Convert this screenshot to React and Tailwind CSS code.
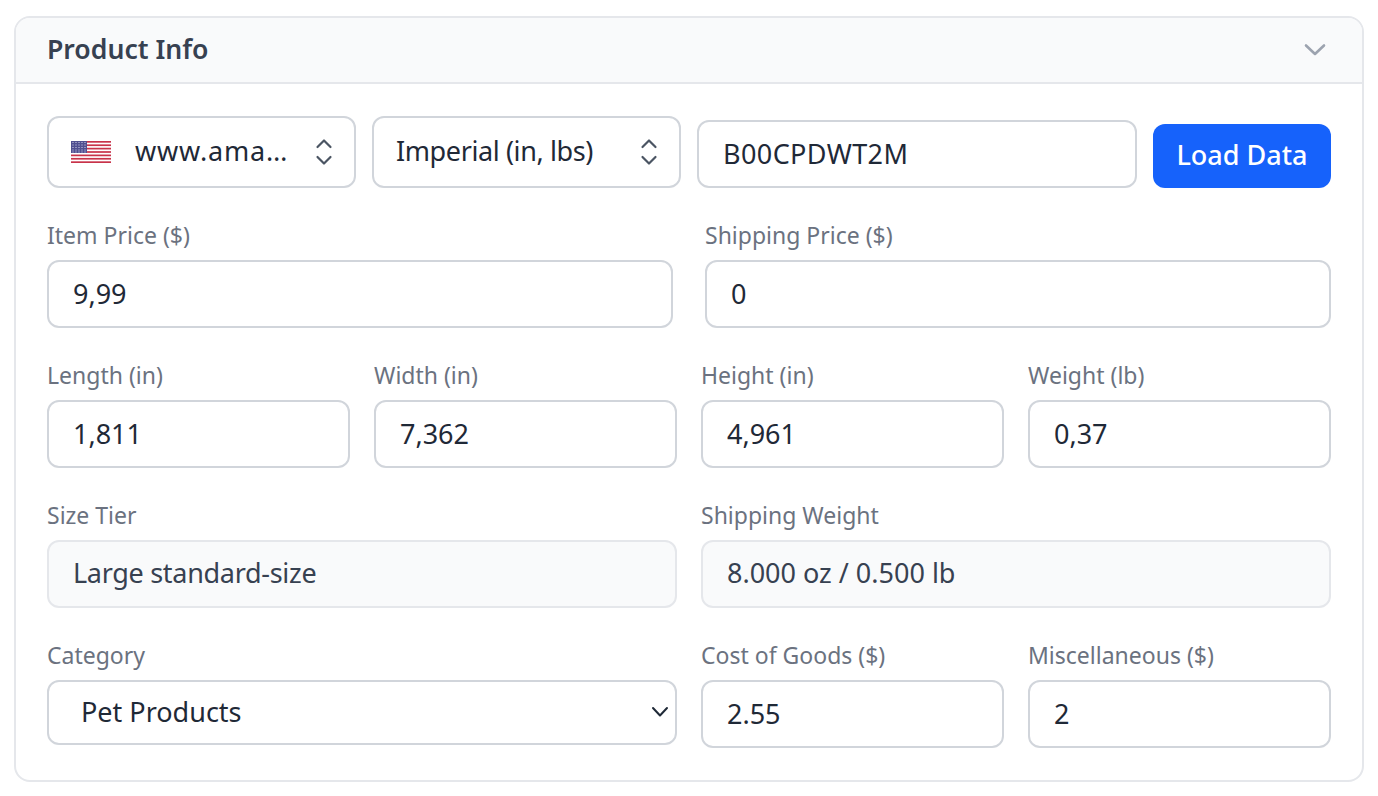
import React from "react";

const inputCls = "block w-full h-[68px] rounded-[12px] border-2 border-[#d1d5db] bg-white pl-[24px] pr-3 pb-[2px] text-[27px] text-[#1f2937] outline-none";
const labelCls = "block h-[32px] mb-2 text-[23px] leading-[30px] text-[#6b7280]";

function Updown() {
  return (
    <svg width="20" height="30" viewBox="0 0 20 30" fill="none" stroke="#4b5563" strokeWidth="2.2" strokeLinecap="round" strokeLinejoin="round" className="shrink-0">
      <path d="M3.5 10 L10 3.5 L16.5 10" />
      <path d="M3.5 20 L10 26.5 L16.5 20" />
    </svg>
  );
}

function Flag() {
  const stripes = [0, 1, 2, 3, 4, 5, 6, 7, 8, 9, 10, 11, 12];
  return (
    <svg width="40" height="22" viewBox="0 0 40 22" className="shrink-0">
      <rect width="40" height="22" fill="#fff" />
      {stripes.filter((i) => i % 2 === 0).map((i) => (
        <rect key={i} x="0" y={i * (22 / 13)} width="40" height={22 / 13} fill="#c8334a" />
      ))}
      <rect width="16" height="12" fill="#4f4f90" />
      {[1.5, 4, 6.5, 9, 11].map((y) =>
        [2, 5, 8, 11, 14].map((x) => <rect key={x + "-" + y} x={x - 0.5} y={y - 0.5} width="1" height="1" fill="#d8d8ee" />)
      )}
    </svg>
  );
}

function Field({ label, value, muted, tracking }) {
  return (
    <div className="min-w-0 flex-1">
      <label className={labelCls}>{label}</label>
      {muted ? (
        <div className={"flex h-[68px] items-center rounded-[12px] border-2 border-[#e5e7eb] bg-[#f9fafb] pl-[24px] pb-[2px] text-[27px] text-[#374151] " + (tracking || "")}>{value}</div>
      ) : (
        <input className={inputCls} defaultValue={value} />
      )}
    </div>
  );
}

export default function App() {
  return (
    <div className="h-[796px] w-[1378px] bg-white pl-[14px] pt-[16px] font-['Noto_Sans',sans-serif]">
      <div className="w-[1350px] overflow-hidden rounded-[16px] border-2 border-[#e5e7eb]">
        <div className="flex h-[66px] items-center justify-between border-b-2 border-[#e5e7eb] bg-[#f9fafb] pl-[31px] pr-[35px]">
          <h2 className="text-[26.6px] font-semibold text-[#374151]">Product Info</h2>
          <svg width="24" height="14" viewBox="0 0 24 14" fill="none" stroke="#9ca3af" strokeWidth="2.6" strokeLinecap="round" strokeLinejoin="round">
            <path d="M3 2.5 L12 11 L21 2.5" />
          </svg>
        </div>
        <div className="flex flex-col gap-8 px-[31px] pb-[32px] pt-[32px]">
          <div className="flex items-end gap-4">
            <div className="flex h-[72px] w-[309px] shrink-0 items-center rounded-[12px] border-2 border-[#d1d5db] bg-white pl-[22px] pr-[20px]">
              <Flag />
              <span className="ml-[24px] flex-1 pb-[2px] text-[27px] tracking-[0.8px] text-[#1f2937]">www.ama…</span>
              <Updown />
            </div>
            <div className="flex h-[72px] w-[309px] shrink-0 items-center justify-between rounded-[12px] border-2 border-[#d1d5db] bg-white pl-[22px] pr-[20px]">
              <span className="pb-[2px] text-[27px] tracking-[-0.4px] text-[#1f2937]">Imperial (in, lbs)</span>
              <Updown />
            </div>
            <input className={inputCls + " !w-[440px] shrink-0 tracking-[0.4px]"} defaultValue="B00CPDWT2M" />
            <button className="h-[64px] w-[178px] shrink-0 rounded-[12px] bg-[#1662fb] pb-[2px] text-[27px] font-medium text-white">Load Data</button>
          </div>

          <div className="flex gap-8">
            <Field label="Item Price ($)" value="9,99" />
            <Field label="Shipping Price ($)" value="0" />
          </div>

          <div className="flex gap-6">
            <Field label="Length (in)" value="1,811" />
            <Field label="Width (in)" value="7,362" />
            <Field label="Height (in)" value="4,961" />
            <Field label="Weight (lb)" value="0,37" />
          </div>

          <div className="flex gap-6">
            <Field label="Size Tier" value="Large standard-size" muted tracking="tracking-[-0.3px]" />
            <Field label="Shipping Weight" value="8.000 oz / 0.500 lb" muted />
          </div>

          <div className="flex gap-6">
            <div className="w-[630px] shrink-0">
              <label className={labelCls}>Category</label>
              <div className="relative">
                <select className="block h-[65px] w-full appearance-none rounded-[12px] border-2 border-[#d1d5db] bg-white pl-[32px] text-[27px] text-[#1f2937] outline-none" defaultValue="Pet Products">
                  <option>Pet Products</option>
                </select>
                <svg width="18" height="12" viewBox="0 0 18 12" fill="none" stroke="#1f2937" strokeWidth="2" strokeLinecap="round" strokeLinejoin="round" className="pointer-events-none absolute right-[8px] top-[26px]">
                  <path d="M2 2 L9 9.5 L16 2" />
                </svg>
              </div>
            </div>
            <Field label="Cost of Goods ($)" value="2.55" />
            <Field label="Miscellaneous ($)" value="2" />
          </div>
        </div>
      </div>
    </div>
  );
}
